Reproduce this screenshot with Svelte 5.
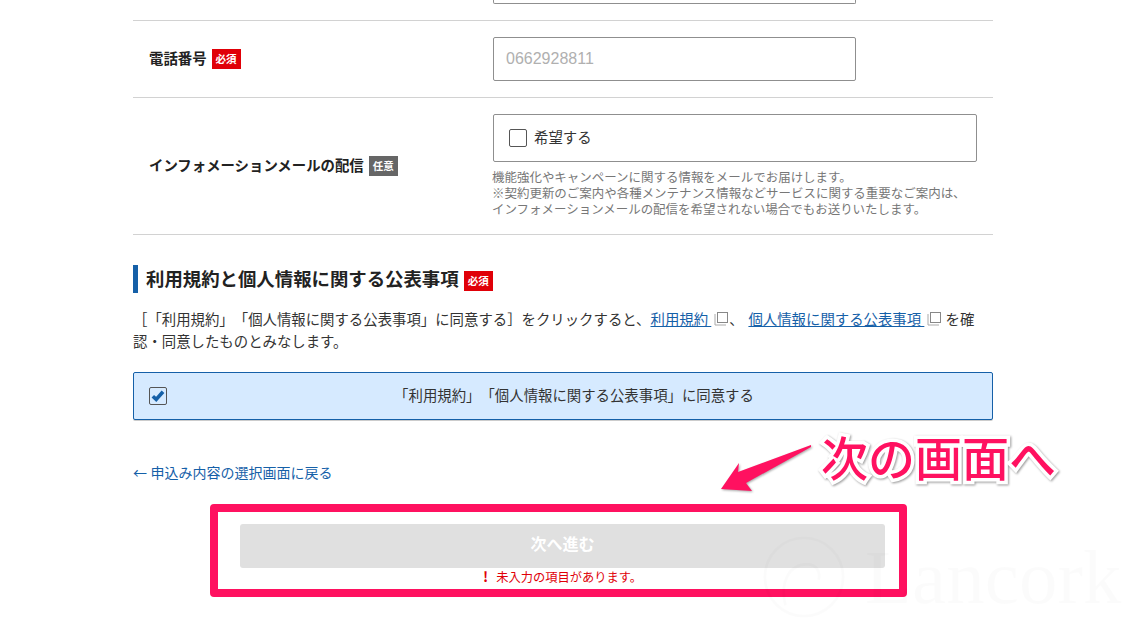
<script>
  const help = [
    '機能強化やキャンペーンに関する情報をメールでお届けします。',
    '※契約更新のご案内や各種メンテナンス情報などサービスに関する重要なご案内は、',
    'インフォメーションメールの配信を希望されない場合でもお送りいたします。'
  ];
</script>

<div class="page">
  <main class="main">
    <div class="row first">
      <div class="label"></div>
      <div class="field"><div class="stub"></div></div>
    </div>

    <div class="row phone">
      <div class="label"><span class="label-text">電話番号</span><span class="badge req">必須</span></div>
      <div class="field"><input class="tel" type="text" placeholder="0662928811" /></div>
    </div>

    <div class="row mail">
      <div class="label"><span class="label-text">インフォメーションメールの配信</span><span class="badge opt">任意</span></div>
      <div class="field mail-field">
        <label class="wish"><span class="box"></span><span class="wish-text">希望する</span></label>
        <p class="help">
          {#each help as line}<span>{line}</span>{/each}
        </p>
      </div>
    </div>

    <h2 class="heading"><span class="label-text">利用規約と個人情報に関する公表事項</span><span class="badge req big">必須</span></h2>

    <p class="lead">
      ［「利用規約」「個人情報に関する公表事項」に同意する］をクリックすると、<a href="#a">利用規約&nbsp;</a><svg class="ext" viewBox="0 0 14 14" aria-hidden="true"><path d="M1 2v11h11" fill="none" stroke="#aaa"/><rect x="3.5" y=".5" width="10" height="10" fill="#fff" stroke="#888"/></svg>、 <a class="second" href="#b">個人情報に関する公表事項&nbsp;</a><svg class="ext" viewBox="0 0 14 14" aria-hidden="true"><path d="M1 2v11h11" fill="none" stroke="#aaa"/><rect x="3.5" y=".5" width="10" height="10" fill="#fff" stroke="#888"/></svg> を確認・同意したものとみなします。
    </p>

    <div class="agree">
      <span class="check">
        <svg viewBox="0 0 16 16" aria-hidden="true"><path d="M2.8 8.2 6.2 11.4 13 3.8" fill="none" stroke="#1560a8" stroke-width="3.6"/></svg>
      </span>
      <span class="agree-text">「利用規約」「個人情報に関する公表事項」に同意する</span>
    </div>

    <a class="back" href="#back"><span class="back-arrow">←</span>申込み内容の選択画面に戻る</a>

    <div class="callout">
      <button class="next" type="button" disabled>次へ進む</button>
      <p class="error"><span class="mark">!</span>未入力の項目があります。</p>
    </div>
  </main>

  <div class="watermark">
    <svg class="wm-logo" viewBox="0 0 90 90" aria-hidden="true">
      <circle cx="45" cy="45" r="40" fill="none" stroke="currentColor" stroke-width="3"/>
      <path d="M26 74C20 50 30 32 48 32c10 0 14 8 12 16" fill="none" stroke="currentColor" stroke-width="3"/>
    </svg>
    <span>Lancork</span>
  </div>
  <svg class="arrow" viewBox="0 0 100 56" aria-hidden="true">
    <path d="M91 5 18 32 19 23 1 49 32 51 26 43 91 7Z" fill="#ff1160"/>
  </svg>
  <div class="note">次の画面へ</div>
</div>

<style>
  :global(body) {
    margin: 0;
    background: #fff;
  }
  .page {
    position: relative;
    width: 1133px;
    height: 629px;
    overflow: hidden;
    font-family: "Noto Sans CJK JP", "Liberation Sans", sans-serif;
    color: #222;
    text-spacing-trim: space-all;
  }
  .main {
    width: 860px;
    margin-left: 133px;
  }
  .row {
    display: flex;
    align-items: center;
    border-bottom: 1px solid #d2d2d2;
    box-sizing: border-box;
  }
  .first {
    height: 21px;
    align-items: flex-start;
  }
  .phone {
    height: 77px;
  }
  .mail {
    height: 137px;
  }
  .mail-field {
    margin-top: -2px;
  }
  .label {
    width: 360px;
    padding-left: 16px;
    box-sizing: border-box;
    font-size: 14.4px;
    font-weight: 700;
    line-height: 20px;
    display: flex;
    align-items: center;
    flex: none;
  }
  .label-text {
    padding-bottom: 2px;
  }
  .stub {
    width: 363px;
    height: 4px;
    box-sizing: border-box;
    border: 1px solid #8f8f8f;
    border-top: 0;
    border-radius: 0 0 2px 2px;
  }
  .badge {
    display: inline-block;
    width: 29px;
    height: 20px;
    margin-left: 5px;
    font-size: 10.5px;
    font-weight: 700;
    line-height: 20px;
    text-align: center;
    color: #fff;
  }
  .req {
    background: #e00008;
  }
  .opt {
    background: #666;
  }
  .tel {
    display: block;
    width: 363px;
    height: 44px;
    box-sizing: border-box;
    border: 1px solid #8f8f8f;
    border-radius: 2px;
    padding: 0 12px;
    font-family: "Liberation Sans", sans-serif;
    font-size: 16px;
    background: #fff;
  }
  .tel::placeholder {
    color: #b0b0b0;
    opacity: 1;
  }
  .wish {
    width: 484px;
    height: 48px;
    box-sizing: border-box;
    border: 1px solid #8f8f8f;
    border-radius: 2px;
    display: flex;
    align-items: center;
    padding-left: 15px;
    font-size: 14.4px;
    color: #333;
  }
  .wish-text {
    padding-bottom: 2px;
  }
  .box {
    width: 18px;
    height: 18px;
    box-sizing: border-box;
    border: 1px solid #555;
    border-radius: 2px;
    margin-right: 7px;
    background: #fff;
  }
  .help {
    margin: 7px 0 0 -1px;
    font-size: 12.48px;
    line-height: 16px;
    color: #777;
  }
  .help span {
    display: block;
  }
  .heading {
    margin: 30px 0 0;
    height: 28px;
    box-sizing: border-box;
    border-left: 5px solid #1560a8;
    padding-left: 8px;
    font-size: 18.4px;
    font-weight: 700;
    line-height: 28px;
    display: flex;
    align-items: center;
    white-space: nowrap;
  }
  .heading .big {
    margin-top: 4px;
  }
  .lead {
    margin: 15px 0 0;
    font-size: 14.4px;
    line-height: 22px;
    color: #333;
  }
  .lead a {
    color: #1560a8;
    padding-right: 2px;
  }
  .lead .second {
    margin-left: 1.5px;
  }
  .ext {
    width: 14px;
    height: 14px;
    margin: 0 1px;
    vertical-align: -1px;
  }
  .agree {
    margin-top: 20px;
    height: 48px;
    box-sizing: border-box;
    border: 1px solid #1560a8;
    border-radius: 2px;
    background: #d6eaff;
    display: flex;
    align-items: center;
    position: relative;
    padding-left: 22px;
    box-shadow: 0 1px 0 #ccc;
  }
  .check {
    position: absolute;
    left: 15px;
    top: 14px;
    width: 18px;
    height: 18px;
    box-sizing: border-box;
    border: 1px solid #555;
    border-radius: 2px;
    display: flex;
  }
  .check svg {
    width: 100%;
    height: 100%;
  }
  .agree-text {
    flex: 1;
    text-align: center;
    font-size: 14.4px;
    color: #333;
    padding-bottom: 4px;
  }
  .back {
    display: block;
    margin-top: 41px;
    font-size: 14px;
    line-height: 22px;
    color: #1560a8;
    text-decoration: none;
  }
  .back-arrow {
    margin-right: 3.5px;
  }
  .callout {
    width: 697px;
    height: 93px;
    box-sizing: border-box;
    margin: 21px 0 0 77px;
    border: 8px solid #ff1160;
    border-radius: 4px;
    padding: 12px 14px 0 22px;
    background: #fff;
  }
  .next {
    display: block;
    width: 100%;
    height: 44px;
    border: 0;
    border-radius: 3px;
    background: #e0e0e0;
    color: #fff;
    font-family: inherit;
    font-size: 16px;
    font-weight: 700;
    padding: 0 0 7px;
  }
  .error {
    margin: 0;
    text-align: center;
    font-size: 12.24px;
    line-height: 16px;
    color: #e00008;
    white-space: nowrap;
  }
  .mark {
    font-weight: 700;
    font-size: 14px;
    margin-right: 8px;
  }
  .watermark {
    position: absolute;
    left: 760px;
    top: 530px;
    display: flex;
    align-items: flex-start;
    font-family: "Liberation Serif", serif;
    font-size: 77px;
    line-height: 94px;
    color: rgba(0, 0, 0, 0.015);
    pointer-events: none;
    white-space: nowrap;
  }
  .wm-logo {
    width: 88px;
    height: 88px;
    margin: 3px 17px 0 0;
  }
  .arrow {
    position: absolute;
    left: 720px;
    top: 440px;
    width: 100px;
    height: 56px;
    filter: drop-shadow(1px 1px 1px rgba(0, 0, 0, 0.35));
  }
  .note {
    position: absolute;
    left: 821px;
    top: 425px;
    font-size: 47px;
    font-weight: 500;
    line-height: 62px;
    white-space: nowrap;
    color: #ff1160;
    -webkit-text-stroke: 7px #fff;
    paint-order: stroke fill;
    filter: drop-shadow(1px 1px 1px rgba(0, 0, 0, 0.4));
  }
</style>
